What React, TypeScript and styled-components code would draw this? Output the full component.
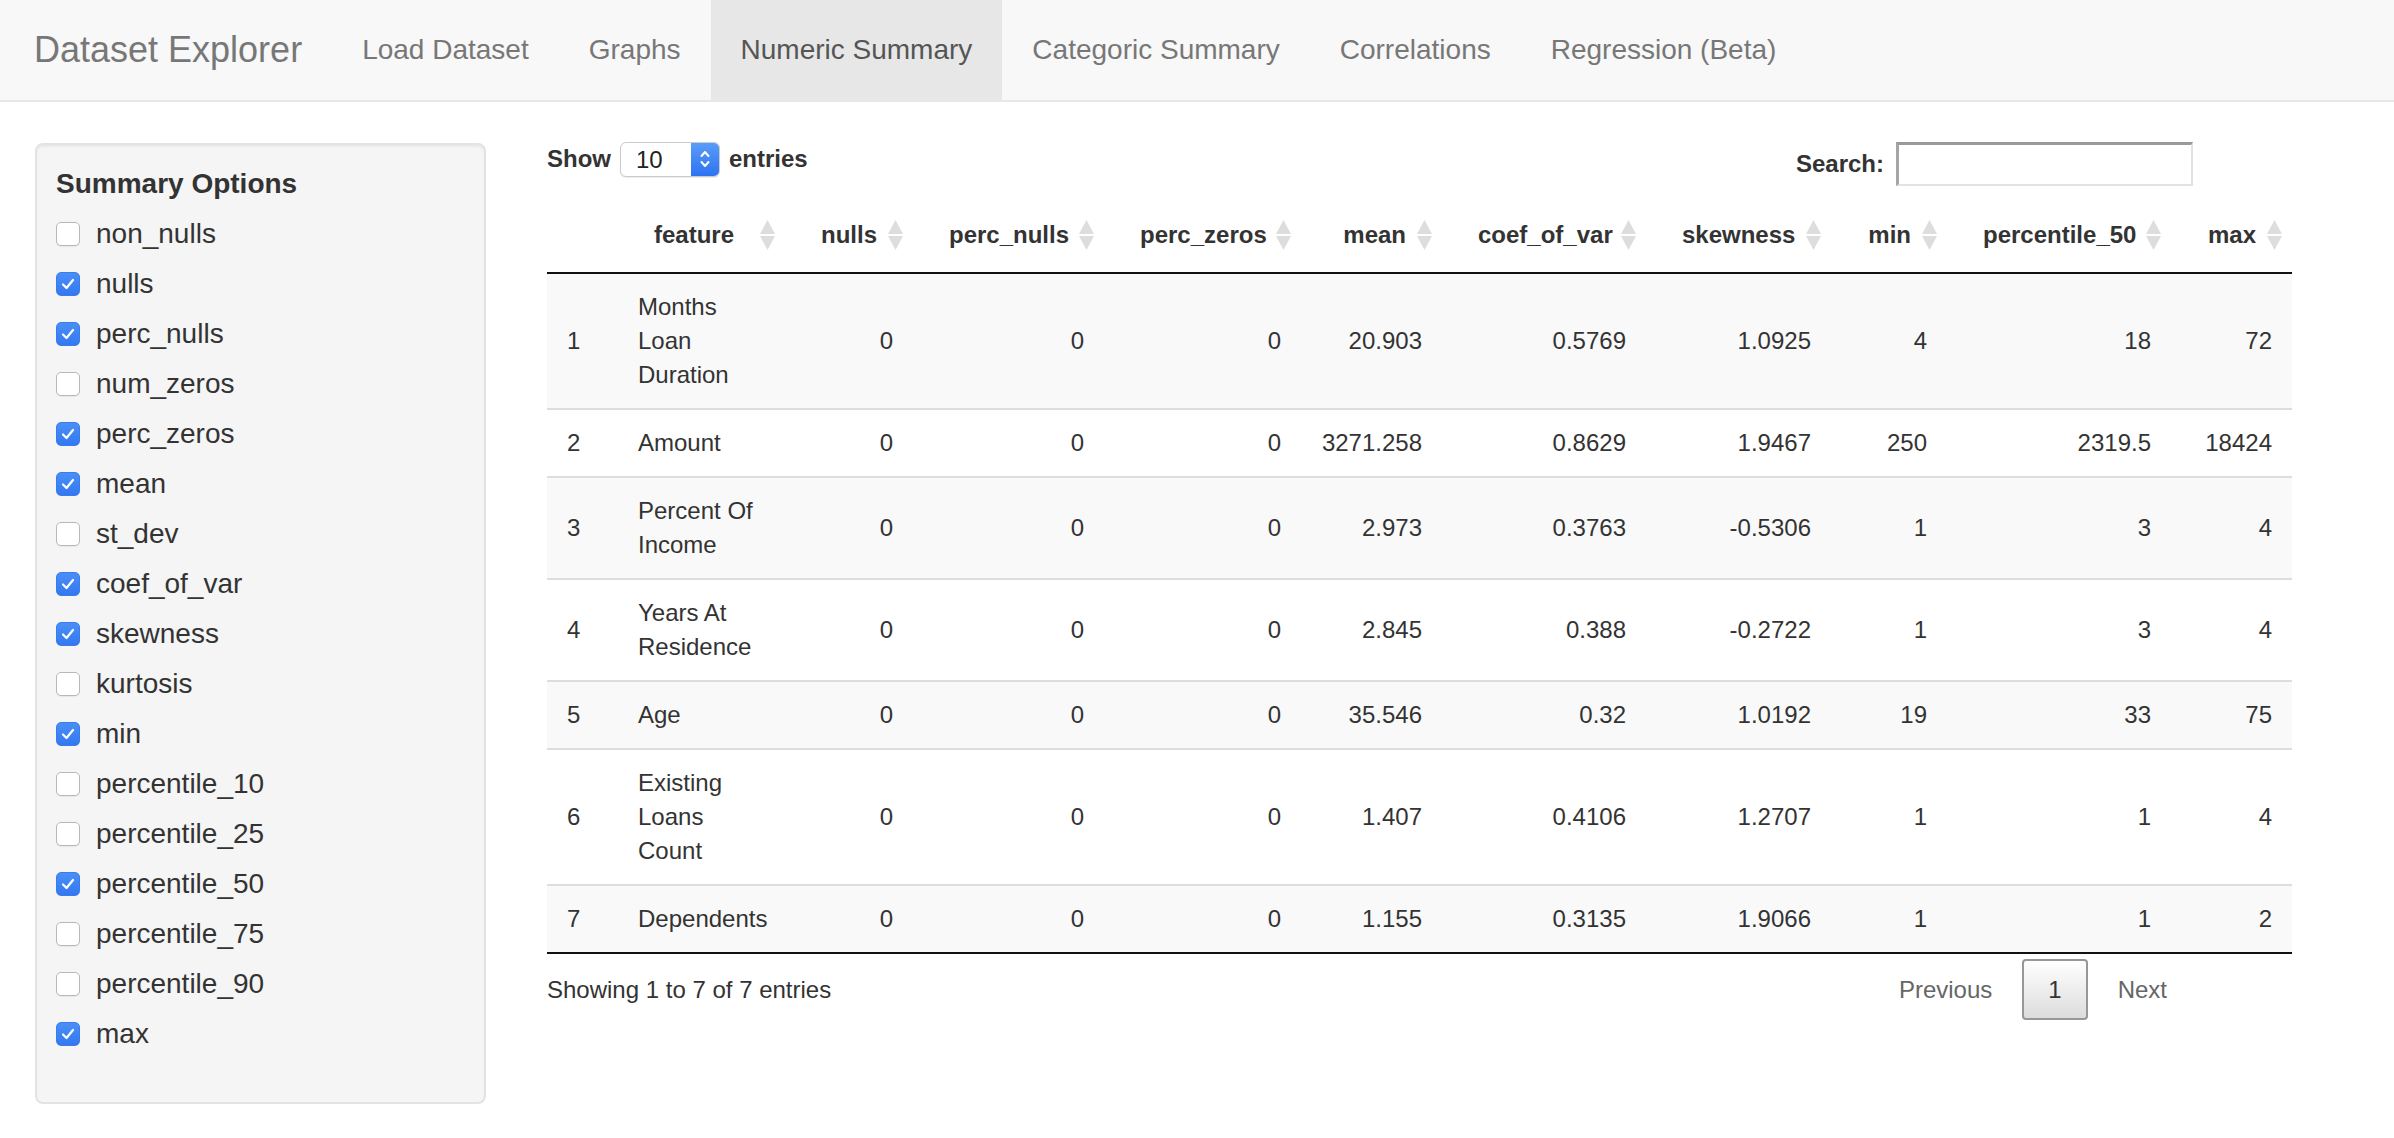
import React from "react";
import styled, { createGlobalStyle } from "styled-components";

const GlobalStyle = createGlobalStyle`
  html, body { margin: 0; padding: 0; background: #ffffff; }
  body {
    font-family: "Liberation Sans", Arial, Helvetica, sans-serif;
    color: #333333;
  }
  * { box-sizing: border-box; }
`;

const Navbar = styled.nav`
  display: flex;
  align-items: stretch;
  height: 102px;
  background: #f8f8f8;
  border-bottom: 2px solid #e7e7e7;
`;

const Brand = styled.div`
  padding: 0 30px 0 34px;
  font-size: 36px;
  line-height: 100px;
  color: #777777;
`;

const NavList = styled.ul`
  display: flex;
  margin: 0;
  padding: 0;
  list-style: none;
`;

const NavItem = styled.li<{ $active?: boolean }>`
  padding: 0 30px;
  font-size: 28px;
  line-height: 100px;
  color: ${(p) => (p.$active ? "#555555" : "#777777")};
  background: ${(p) => (p.$active ? "#e7e7e7" : "transparent")};
  white-space: nowrap;
`;

const Body = styled.div`
  display: flex;
  align-items: flex-start;
  padding-top: 40px;
`;

const Well = styled.aside`
  flex: 0 0 451px;
  width: 451px;
  margin: 1px 0 0 35px;
  padding: 19px 19px 48px 19px;
  background: #f5f5f5;
  border: 2px solid #e3e3e3;
  border-radius: 8px;
  box-shadow: inset 0 2px 2px rgba(0, 0, 0, 0.05);
`;

const WellTitle = styled.div`
  font-size: 28px;
  font-weight: 700;
  line-height: 40px;
  margin-bottom: 10px;
`;

const CheckList = styled.div`
  display: flex;
  flex-direction: column;
  gap: 10px;
`;

const CheckRow = styled.label`
  display: flex;
  align-items: center;
  height: 40px;
  font-size: 28px;
  line-height: 40px;
  color: #333333;
`;

const Box = styled.span<{ $checked?: boolean }>`
  display: inline-flex;
  align-items: center;
  justify-content: center;
  width: 24px;
  height: 24px;
  margin-right: 16px;
  border-radius: 5px;
  background: ${(p) => (p.$checked ? "linear-gradient(#4a8ff7, #3378f0)" : "#ffffff")};
  border: 1px solid ${(p) => (p.$checked ? "#3a7cf0" : "#b8b8b8")};
  box-shadow: ${(p) => (p.$checked ? "none" : "0 1px 1px rgba(0,0,0,0.06)")};
`;

const Main = styled.main`
  flex: 0 0 1646px;
  width: 1646px;
  margin-left: 61px;
`;

const Controls = styled.div`
  display: flex;
  justify-content: space-between;
  align-items: flex-start;
  height: 44px;
`;

const LengthCtl = styled.div`
  display: flex;
  align-items: center;
  gap: 9px;
  height: 34px;
  font-size: 24px;
  font-weight: 700;
`;

const SelectBox = styled.div`
  display: flex;
  width: 100px;
  height: 35px;
  background: #ffffff;
  border: 1px solid #cbcbcb;
  border-radius: 6px;
  box-shadow: 0 1px 1px rgba(0, 0, 0, 0.08);
  overflow: hidden;
`;

const SelectValue = styled.span`
  flex: 1;
  padding-left: 15px;
  font-size: 24px;
  font-weight: 400;
  line-height: 33px;
  color: #222222;
`;

const Stepper = styled.span`
  display: flex;
  align-items: center;
  justify-content: center;
  width: 28px;
  background: linear-gradient(#5a9cfa, #2c73f1);
`;

const FilterCtl = styled.label`
  display: flex;
  align-items: center;
  height: 44px;
  font-size: 24px;
  font-weight: 700;
`;

const SearchInput = styled.input`
  width: 297px;
  height: 44px;
  margin-left: 12px;
  border-style: solid;
  border-width: 3px 2px 2px 3px;
  border-color: #9a9a9a #e2e2e2 #e2e2e2 #a5a5a5;
  background: #ffffff;
  font-size: 24px;
  outline: none;
`;

const Table = styled.table`
  width: 1745px;
  margin-top: 12px;
  border-collapse: collapse;
  table-layout: fixed;
  border-bottom: 2px solid #111111;
`;

const Th = styled.th<{ $align: string; $pad: number }>`
  position: relative;
  padding: 20px ${(p) => p.$pad}px;
  font-size: 24px;
  font-weight: 700;
  line-height: 34px;
  color: #333333;
  text-align: ${(p) => p.$align};
  border-bottom: 2px solid #111111;
  white-space: nowrap;
`;

const SortIcon = styled.svg`
  position: absolute;
  right: 9px;
  top: 50%;
  transform: translateY(-50%);
`;

const Tr = styled.tr<{ $odd: boolean }>`
  background: ${(p) => (p.$odd ? "#f9f9f9" : "#ffffff")};
  &:not(:first-child) > td { border-top: 2px solid #dddddd; }
`;

const Td = styled.td<{ $align: string }>`
  padding: 16px 20px;
  font-size: 24px;
  line-height: 34px;
  color: #333333;
  text-align: ${(p) => p.$align};
  vertical-align: middle;
`;

const Footer = styled.div`
  display: flex;
  justify-content: space-between;
  align-items: center;
  margin-top: 5px;
`;

const Info = styled.div`
  font-size: 24px;
  line-height: 34px;
  color: #333333;
`;

const Pager = styled.div`
  display: flex;
  align-items: center;
`;

const PageButton = styled.span<{ $current?: boolean }>`
  margin-left: 4px;
  padding: 12px 24px;
  font-size: 24px;
  line-height: 33px;
  border-radius: 4px;
  color: ${(p) => (p.$current ? "#333333" : "#666666")};
  border: 2px solid ${(p) => (p.$current ? "#979797" : "transparent")};
  background: ${(p) => (p.$current ? "linear-gradient(#ffffff, #dcdcdc)" : "transparent")};
`;

type Col = { key: string; label: string; width: number; align: "left" | "right"; sortable: boolean };

const columns: Col[] = [
  { key: "idx", label: "", width: 71, align: "left", sortable: false },
  { key: "feature", label: "feature", width: 167, align: "left", sortable: true },
  { key: "nulls", label: "nulls", width: 128, align: "right", sortable: true },
  { key: "perc_nulls", label: "perc_nulls", width: 191, align: "right", sortable: true },
  { key: "perc_zeros", label: "perc_zeros", width: 197, align: "right", sortable: true },
  { key: "mean", label: "mean", width: 141, align: "right", sortable: true },
  { key: "coef_of_var", label: "coef_of_var", width: 204, align: "right", sortable: true },
  { key: "skewness", label: "skewness", width: 185, align: "right", sortable: true },
  { key: "min", label: "min", width: 116, align: "right", sortable: true },
  { key: "percentile_50", label: "percentile_50", width: 224, align: "right", sortable: true },
  { key: "max", label: "max", width: 121, align: "right", sortable: true },
];

const rows: string[][] = [
  ["1", "Months Loan Duration", "0", "0", "0", "20.903", "0.5769", "1.0925", "4", "18", "72"],
  ["2", "Amount", "0", "0", "0", "3271.258", "0.8629", "1.9467", "250", "2319.5", "18424"],
  ["3", "Percent Of Income", "0", "0", "0", "2.973", "0.3763", "-0.5306", "1", "3", "4"],
  ["4", "Years At Residence", "0", "0", "0", "2.845", "0.388", "-0.2722", "1", "3", "4"],
  ["5", "Age", "0", "0", "0", "35.546", "0.32", "1.0192", "19", "33", "75"],
  ["6", "Existing Loans Count", "0", "0", "0", "1.407", "0.4106", "1.2707", "1", "1", "4"],
  ["7", "Dependents", "0", "0", "0", "1.155", "0.3135", "1.9066", "1", "1", "2"],
];

const options: [string, boolean][] = [
  ["non_nulls", false],
  ["nulls", true],
  ["perc_nulls", true],
  ["num_zeros", false],
  ["perc_zeros", true],
  ["mean", true],
  ["st_dev", false],
  ["coef_of_var", true],
  ["skewness", true],
  ["kurtosis", false],
  ["min", true],
  ["percentile_10", false],
  ["percentile_25", false],
  ["percentile_50", true],
  ["percentile_75", false],
  ["percentile_90", false],
  ["max", true],
];

const navItems = ["Load Dataset", "Graphs", "Numeric Summary", "Categoric Summary", "Correlations", "Regression (Beta)"];

const Check = () => (
  <svg width="14" height="12" viewBox="0 0 14 12">
    <path d="M2 6.5 L5.5 10 L12 2" fill="none" stroke="#ffffff" strokeWidth="2.2" strokeLinecap="round" strokeLinejoin="round" />
  </svg>
);

const Sort = () => (
  <SortIcon width="17" height="32" viewBox="0 0 17 32">
    <path d="M8.5 1 L16 15 L1 15 Z" fill="#dddddd" />
    <path d="M1 17 L16 17 L8.5 31 Z" fill="#dddddd" />
  </SortIcon>
);

export default function App() {
  return (
    <>
      <GlobalStyle />
      <Navbar>
        <Brand>Dataset Explorer</Brand>
        <NavList>
          {navItems.map((n) => (
            <NavItem key={n} $active={n === "Numeric Summary"}>
              {n}
            </NavItem>
          ))}
        </NavList>
      </Navbar>
      <Body>
        <Well>
          <WellTitle>Summary Options</WellTitle>
          <CheckList>
            {options.map(([name, checked]) => (
              <CheckRow key={name}>
                <Box $checked={checked}>{checked && <Check />}</Box>
                {name}
              </CheckRow>
            ))}
          </CheckList>
        </Well>
        <Main>
          <Controls>
            <LengthCtl>
              Show
              <SelectBox>
                <SelectValue>10</SelectValue>
                <Stepper>
                  <svg width="12" height="22" viewBox="0 0 12 22">
                    <path d="M2.5 8 L6 4 L9.5 8" fill="none" stroke="#ffffff" strokeWidth="2" strokeLinecap="round" strokeLinejoin="round" />
                    <path d="M2.5 14 L6 18 L9.5 14" fill="none" stroke="#ffffff" strokeWidth="2" strokeLinecap="round" strokeLinejoin="round" />
                  </svg>
                </Stepper>
              </SelectBox>
              entries
            </LengthCtl>
            <FilterCtl>
              Search:
              <SearchInput type="search" />
            </FilterCtl>
          </Controls>
          <Table>
            <colgroup>
              {columns.map((c) => (
                <col key={c.key} style={{ width: c.width }} />
              ))}
            </colgroup>
            <thead>
              <tr>
                {columns.map((c) => (
                  <Th key={c.key} $align={c.align} $pad={c.sortable ? 36 : 20}>
                    {c.label}
                    {c.sortable && <Sort />}
                  </Th>
                ))}
              </tr>
            </thead>
            <tbody>
              {rows.map((r, i) => (
                <Tr key={r[0]} $odd={i % 2 === 0}>
                  {r.map((v, j) => (
                    <Td key={j} $align={columns[j].align}>
                      {v}
                    </Td>
                  ))}
                </Tr>
              ))}
            </tbody>
          </Table>
          <Footer>
            <Info>Showing 1 to 7 of 7 entries</Info>
            <Pager>
              <PageButton>Previous</PageButton>
              <PageButton $current>1</PageButton>
              <PageButton>Next</PageButton>
            </Pager>
          </Footer>
        </Main>
      </Body>
    </>
  );
}
